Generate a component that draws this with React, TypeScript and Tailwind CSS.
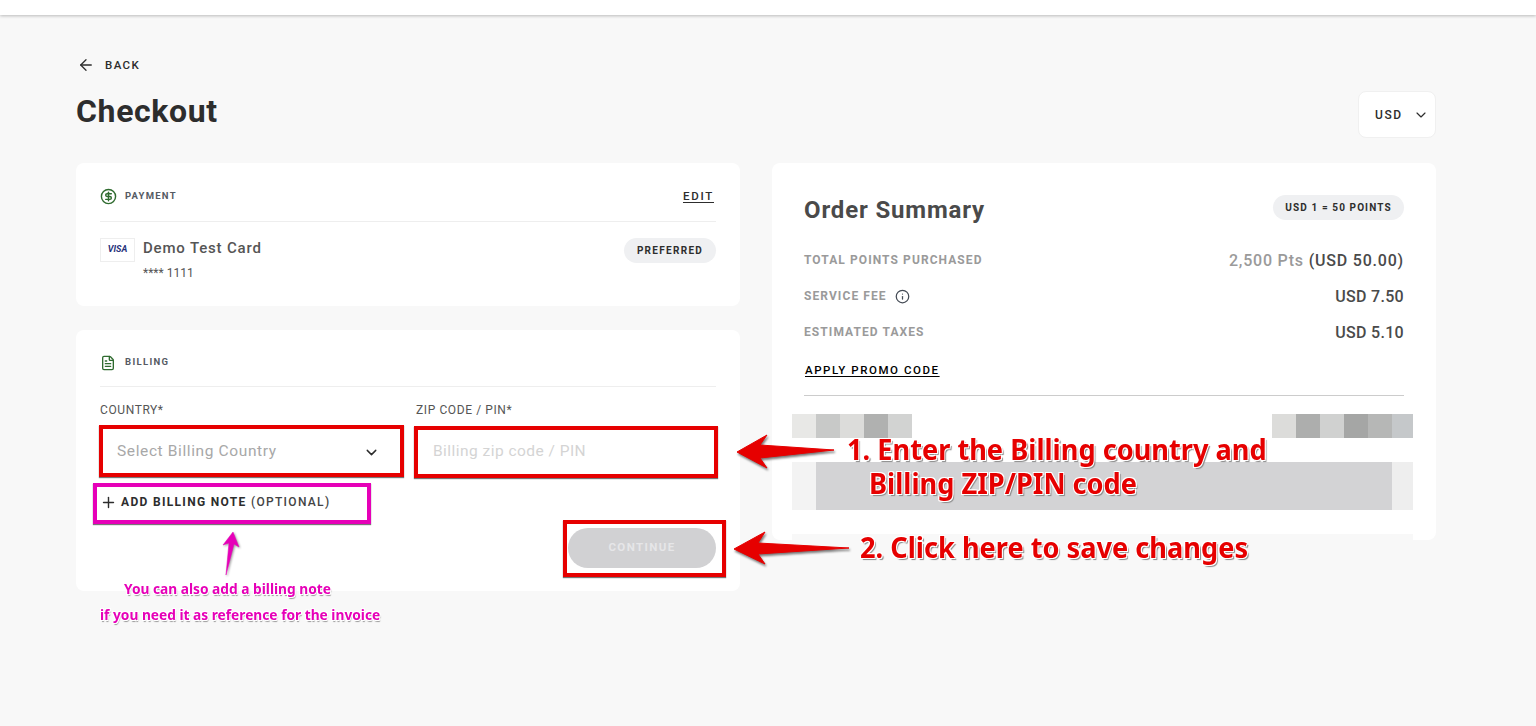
import { ArrowLeft, ChevronDown, CircleDollarSign, FileText, Info, Plus } from "lucide-react";

const outlineRed =
  "[text-shadow:1px_1px_0_#fff,-1px_-1px_0_#fff,1px_-1px_0_#fff,-1px_1px_0_#fff,2px_2px_1px_#888]";
const outlinePink =
  "[text-shadow:1px_1px_0_#fff,-1px_-1px_0_#fff,1px_-1px_0_#fff,-1px_1px_0_#fff,1px_2px_1px_#999]";

const leftMosaic = ["#e8e8e6", "#c8c9c8", "#dcdcda", "#b0b1b0", "#d2d3d2"];
const rightMosaic = ["#dcdcda", "#adaead", "#d0d1d0", "#a5a6a5", "#b6b7b6", "#c5c8ca"];

function SummaryRow({ label, children }: { label: React.ReactNode; children: React.ReactNode }) {
  return (
    <div className="flex h-9 items-center justify-between">
      <div className="-mt-[2px] flex items-center gap-2 text-[12px] font-bold tracking-[0.09em] text-[#9a9a9a]">{label}</div>
      <div className="text-[16px] font-medium tracking-[0.02em] text-[#4a4a4a]">{children}</div>
    </div>
  );
}

export default function App() {
  return (
    <div className="relative h-[726px] overflow-hidden bg-[#f8f8f8] font-['Roboto',sans-serif] text-[#2d2d2d]">
      <div className="h-[15px] bg-white shadow-[0_1px_3px_rgba(0,0,0,0.25)]" />

      <main className="pr-[100px] pl-[76px]">
        <div className="mt-[41px] flex h-[18px] items-center gap-[10px] pl-[1px]">
          <ArrowLeft size={18} strokeWidth={1.75} />
          <span className="pt-[1px] text-[11.5px] font-medium tracking-[0.12em]">BACK</span>
        </div>
        <div className="flex h-[89px] items-start justify-between">
          <h1 className="mt-[18px] text-[32px] leading-[38px] font-bold tracking-[0.02em]">Checkout</h1>
          <div className="mt-[17px] flex h-[47px] w-[78px] items-center justify-between rounded-lg border border-[#f0f0f0] bg-white pr-[6px] pl-[16px]">
            <span className="text-[12px] font-medium tracking-[0.13em]">USD</span>
            <ChevronDown size={16} strokeWidth={1.75} />
          </div>
        </div>

        <div className="grid grid-cols-2 gap-8">
          <div className="flex flex-col gap-6">
            <section className="h-[143px] rounded-lg bg-white px-6">
              <div className="flex h-[59px] items-center justify-between border-b border-[#eeeeee] pt-[9px]">
                <div className="flex items-center gap-2">
                  <CircleDollarSign size={17} className="text-[#2f6b2f]" />
                  <span className="text-[9.5px] font-bold tracking-[0.13em] text-[#555a63]">PAYMENT</span>
                </div>
                <span className="mr-[2px] text-[11.5px] font-medium tracking-[0.15em] underline underline-offset-2">EDIT</span>
              </div>
              <div className="flex items-start justify-between pt-4">
                <div className="flex gap-2">
                  <div className="flex h-6 w-[35px] items-center justify-center border border-[#eeeeee]">
                    <span className="text-[9px] font-bold text-[#27317a] italic">VISA</span>
                  </div>
                  <div>
                    <div className="text-[15px] leading-5 font-medium tracking-[0.055em] text-[#555555]">Demo Test Card</div>
                    <div className="mt-2 text-[12px] leading-[14px] text-[#555555]">**** 1111</div>
                  </div>
                </div>
                <span className="flex h-[25px] w-[92px] items-center justify-center rounded-full bg-[#eff0f2] text-[10px] font-bold tracking-[0.13em]">
                  PREFERRED
                </span>
              </div>
            </section>

            <section className="h-[261px] rounded-lg bg-white px-6">
              <div className="flex h-[57px] items-center gap-[9px] border-b border-[#eeeeee] pt-[9px]">
                <FileText size={16} className="text-[#2f6b2f]" />
                <span className="text-[9.5px] font-bold tracking-[0.14em] text-[#555a63]">BILLING</span>
              </div>
              <div className="mt-[15px] grid grid-cols-2 gap-4">
                <div>
                  <label className="block text-[12px] leading-[16px] tracking-[0.05em] text-[#555555]">COUNTRY*</label>
                  <div className="mt-2 flex h-[52px] items-center justify-between pr-[20px] pl-[17px]">
                    <span className="text-[15.5px] tracking-[0.04em] text-[#a8a8a8]">Select Billing Country</span>
                    <ChevronDown size={17} />
                  </div>
                </div>
                <div>
                  <label className="block text-[12px] leading-[16px] tracking-[0.05em] text-[#555555]">ZIP CODE / PIN*</label>
                  <input
                    placeholder="Billing zip code / PIN"
                    className="mt-[7px] h-[52px] w-full bg-transparent pl-[17px] text-[15.5px] tracking-[0.03em] outline-none placeholder:text-[#d4d4d4]"
                  />
                </div>
              </div>
              <div className="mt-[15px] flex items-center gap-1 text-[12px] font-medium tracking-[0.11em]">
                <Plus size={17} />
                <span>
                  <span className="font-bold">ADD BILLING NOTE</span> <span className="text-[#444444]">(OPTIONAL)</span>
                </span>
              </div>
              <div className="mt-[17px] flex justify-end">
                <button className="h-10 w-[148px] rounded-full bg-[#d1d1d3] text-[11.5px] font-bold tracking-[0.12em] text-[#e6e6e8]">
                  CONTINUE
                </button>
              </div>
            </section>
          </div>

          <section className="h-[377px] rounded-lg bg-white px-8 pt-[30px]">
            <div className="flex h-[29px] items-center justify-between">
              <h2 className="mt-1 text-[24px] font-bold tracking-[0.035em] text-[#4a4a4a]">Order Summary</h2>
              <span className="flex h-[25px] w-[131px] items-center justify-center rounded-full bg-[#eff0f2] text-[10px] font-bold tracking-[0.11em]">
                USD 1 = 50 POINTS
              </span>
            </div>
            <div className="mt-[21px]">
              <SummaryRow label="TOTAL POINTS PURCHASED">
                <span className="tracking-[0.05em]">
                  <span className="text-[#9a9a9a]">2,500 Pts</span> (USD 50.00)
                </span>
              </SummaryRow>
              <SummaryRow
                label={
                  <>
                    SERVICE FEE <Info size={15} className="text-[#444b55]" />
                  </>
                }
              >
                USD 7.50
              </SummaryRow>
              <SummaryRow label="ESTIMATED TAXES">USD 5.10</SummaryRow>
            </div>
            <div className="mt-[11px] text-[11.5px] font-medium tracking-[0.135em] text-black underline underline-offset-2">
              <span className="ml-[1px]">APPLY PROMO CODE</span>
            </div>
            <div className="mt-4 border-t border-[#cccccc]" />
          </section>
        </div>
      </main>

      {/* blurred-out totals, pasted over the card */}
      <div className="absolute top-[414px] left-[792px] w-[621px]">
        <div className="flex h-6 justify-between bg-white">
          <div className="flex">
            {leftMosaic.map((c) => (
              <div key={c} className="w-6" style={{ backgroundColor: c }} />
            ))}
          </div>
          <div className="flex">
            {rightMosaic.map((c, i) => (
              <div key={c} className={i === 5 ? "w-[21px]" : "w-6"} style={{ backgroundColor: c }} />
            ))}
          </div>
        </div>
        <div className="h-6 bg-white" />
        <div className="flex h-12">
          <div className="w-6 bg-[#f3f3f3]" />
          <div className="flex-1 bg-[#d3d3d5]" />
          <div className="w-[21px] bg-[#eeeeee]" />
        </div>
        <div className="h-6 bg-white" />
        <div className="h-[6px] bg-[#f8f8f8]" />
      </div>

      {/* annotation boxes */}
      <div className="absolute top-[425px] left-[99px] h-[52px] w-[305px] border-4 border-[#e60000] shadow-[0_1px_1px_#777]" />
      <div className="absolute top-[426px] left-[414px] h-[52px] w-[304px] border-4 border-[#e60000] shadow-[0_1px_1px_#777]" />
      <div className="absolute top-[520px] left-[563px] h-[57px] w-[163px] border-4 border-[#e60000] shadow-[0_1px_1px_#777]" />
      <div className="absolute top-[483px] left-[93px] h-[41px] w-[278px] border-4 border-[#e600b8] shadow-[0_1px_1px_#777]" />

      {/* annotation arrows */}
      <svg className="absolute top-0 left-0 h-[726px] w-[1536px]" viewBox="0 0 1536 726">
        <path
          d="M737 452 L767 435 L760 445 L834 450 L760 458 L767 468 Z"
          fill="#e60000"
          stroke="#e60000"
          strokeLinejoin="round"
          style={{ filter: "drop-shadow(1px 2px 1px #777)" }}
        />
        <path
          d="M734 549 L765 532 L758 543 L849 548 L758 554 L765 564 Z"
          fill="#e60000"
          stroke="#e60000"
          strokeLinejoin="round"
          style={{ filter: "drop-shadow(1px 2px 1px #777)" }}
        />
        <path
          d="M233 532 L223 545 L229 543 L226 575 L234 544 L239 547 Z"
          fill="#e600b8"
          stroke="#e600b8"
          strokeWidth="0.5"
          strokeLinejoin="round"
          style={{ filter: "drop-shadow(1px 1px 1px #999)" }}
        />
      </svg>

      {/* annotation text */}
      <div className={`absolute top-[434px] left-[847px] origin-left scale-x-[0.925] font-['Noto_Sans',sans-serif] text-[29.4px] leading-[30px] font-bold whitespace-nowrap text-[#e60000] ${outlineRed}`}>
        1. Enter the Billing country and
      </div>
      <div className={`absolute top-[468px] left-[869px] origin-left scale-x-[0.925] font-['Noto_Sans',sans-serif] text-[29.4px] leading-[30px] font-bold whitespace-nowrap text-[#e60000] ${outlineRed}`}>
        Billing ZIP/PIN code
      </div>
      <div className={`absolute top-[532px] left-[860px] origin-left scale-x-[0.925] font-['Noto_Sans',sans-serif] text-[29.4px] leading-[30px] font-bold whitespace-nowrap text-[#e60000] ${outlineRed}`}>
        2. Click here to save changes
      </div>
      <div className={`absolute top-[578px] left-[124px] origin-left scale-x-[0.915] font-['Noto_Sans',sans-serif] text-[15px] leading-5 font-bold whitespace-nowrap text-[#e600b8] ${outlinePink}`}>
        You can also add a billing note
      </div>
      <div className={`absolute top-[604px] left-[100px] origin-left scale-x-[0.915] font-['Noto_Sans',sans-serif] text-[15px] leading-5 font-bold whitespace-nowrap text-[#e600b8] ${outlinePink}`}>
        if you need it as reference for the invoice
      </div>
    </div>
  );
}
